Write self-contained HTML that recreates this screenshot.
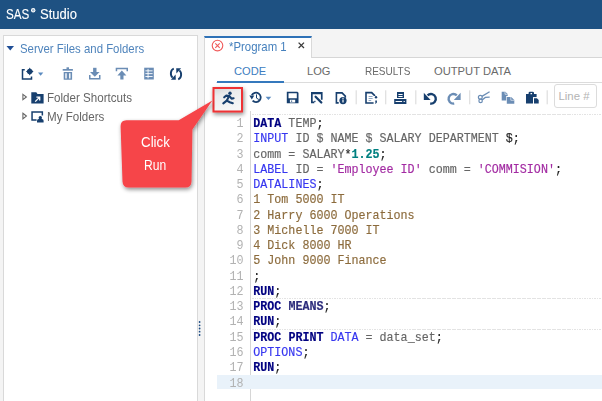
<!DOCTYPE html>
<html><head><meta charset="utf-8">
<style>
*{margin:0;padding:0;box-sizing:border-box}
html,body{width:602px;height:401px;overflow:hidden;background:#f4f4f4;font-family:"Liberation Sans",sans-serif}
.a{position:absolute}
#hdr{left:0;top:0;width:602px;height:28.5px;background:#1e5182}
#lp{left:3px;top:35px;width:195px;height:380px;background:#fff;border:1px solid #d9d9d9}
#rp{left:204px;top:57px;width:410px;height:360px;background:#fff;border-left:1px solid #d9d9d9}
#tab{left:204px;top:36px;width:108px;height:22px;background:#fff;border-top:2px solid #2f72b7;border-left:1px solid #d9d9d9;border-right:1px solid #d9d9d9}
#tabline{left:312px;top:57px;width:300px;height:1px;background:#d6d6d6}
.t{white-space:nowrap;line-height:1}
#code{left:253.3px;top:115.5px;transform:scaleY(1.07);transform-origin:0 0;-webkit-text-stroke:0.15px;font-family:"Liberation Mono",monospace;font-size:11.7px;line-height:14.271px;white-space:pre;color:#656565}
#gut{left:205px;top:115.5px;transform:scaleY(1.07);transform-origin:0 0;width:38.5px;font-family:"Liberation Mono",monospace;font-size:11.7px;line-height:14.271px;white-space:pre;color:#b2b2b2;text-align:right}
.k{color:#000080;font-weight:bold}
.b{color:#3636f0}
.s{color:#a22aa2}
.n{color:#008080;font-weight:bold}
.d{color:#8c6b3c}
.p{color:#222}
</style></head><body>
<div id="hdr" class="a"></div>
<div class="a t" style="left:6.3px;top:7.2px;font-size:14px;color:#fff;-webkit-text-stroke:0.12px #fff;transform:scaleX(0.83);transform-origin:0 0">SAS</div>
<div class="a t" style="left:39.6px;top:7.2px;font-size:14px;color:#fff;-webkit-text-stroke:0.12px #fff;transform:scaleX(0.93);transform-origin:0 0">Studio</div>

<div id="lp" class="a"></div>
<div class="a t" style="left:20px;top:43px;font-size:12.2px;color:#4f84bc;transform:scaleX(0.935);transform-origin:0 0">Server Files and Folders</div>
<div class="a t" style="left:46.7px;top:92px;font-size:12.4px;color:#666;transform:scaleX(0.935);transform-origin:0 0">Folder Shortcuts</div>
<div class="a t" style="left:46.7px;top:111px;font-size:12.4px;color:#666;transform:scaleX(0.935);transform-origin:0 0">My Folders</div>

<div id="rp" class="a"></div>
<div id="tabline" class="a"></div>
<div id="tab" class="a"></div>
<div class="a t" style="left:229px;top:41px;font-size:12.2px;color:#4580bd;transform:scaleX(0.935);transform-origin:0 0">*Program 1</div>
<div class="a" style="left:216px;top:82px;width:390px;height:1px;background:#dcdcdc"></div>
<div class="a" style="left:216.5px;top:81px;width:67.5px;height:2px;background:#3579bd"></div>
<div class="a t" style="left:234px;top:66px;font-size:11.1px;color:#3d7dc0">CODE</div>
<div class="a t" style="left:307px;top:66px;font-size:11.1px;color:#6a6a6a">LOG</div>
<div class="a t" style="left:364.6px;top:66px;font-size:11.1px;color:#6a6a6a;transform:scaleX(0.9);transform-origin:0 0">RESULTS</div>
<div class="a t" style="left:434px;top:66px;font-size:11.2px;color:#6a6a6a">OUTPUT DATA</div>

<!-- line # box -->
<div class="a" style="left:554px;top:84px;width:43px;height:23.5px;border:1.3px solid #dcdcdc;border-radius:3px;background:#fff"></div>
<div class="a t" style="left:558.5px;top:91px;font-size:11.4px;color:#b3b3b3">Line #</div>

<!-- editor -->
<div class="a" style="left:252px;top:114px;width:360px;height:1px;background:repeating-linear-gradient(90deg,#e3e3e3 0 1.5px,transparent 1.5px 2.5px)"></div>
<div class="a" style="left:252px;top:298px;width:360px;height:1px;background:repeating-linear-gradient(90deg,#e3e3e3 0 1.5px,transparent 1.5px 2.5px)"></div>
<div class="a" style="left:252px;top:328.5px;width:360px;height:1px;background:repeating-linear-gradient(90deg,#e3e3e3 0 1.5px,transparent 1.5px 2.5px)"></div>
<div class="a" style="left:250px;top:111px;width:1px;height:300px;background:#d6d6d6"></div>
<div class="a" style="left:216.5px;top:374.8px;width:390px;height:14.6px;background:#e9f2fa"></div>
<div id="gut" class="a">1
2
3
4
5
6
7
8
9
10
11
12
13
14
15
16
17
18</div>
<div id="code" class="a"><span class="k">DATA</span> TEMP<span class="p">;</span>
<span class="b">INPUT</span> ID $ NAME $ SALARY DEPARTMENT <span class="p">$;</span>
comm = SALARY<span class="p">*</span><span class="n">1.25</span><span class="p">;</span>
<span class="b">LABEL</span> ID = <span class="s">'Employee ID'</span> comm = <span class="s">'COMMISION'</span><span class="p">;</span>
<span class="b">DATALINES</span><span class="p">;</span>
<span class="d">1 Tom 5000 IT</span>
<span class="d">2 Harry 6000 Operations</span>
<span class="d">3 Michelle 7000 IT</span>
<span class="d">4 Dick 8000 HR</span>
<span class="d">5 John 9000 Finance</span>
<span class="p">;</span>
<span class="k">RUN</span><span class="p">;</span>
<span class="k">PROC</span> <span class="k" style="color:#2c2c7c">MEANS</span><span class="p">;</span>
<span class="k">RUN</span><span class="p">;</span>
<span class="k">PROC</span> <span class="k">PRINT</span> <span class="b">DATA</span> = data_set<span class="p">;</span>
<span class="b">OPTIONS</span><span class="p">;</span>
<span class="k">RUN</span><span class="p">;</span>
</div>

<svg class="a" style="left:0;top:0" width="602" height="401" viewBox="0 0 602 401">
  <defs>
    <filter id="sh" x="-30%" y="-30%" width="160%" height="160%"><feGaussianBlur in="SourceAlpha" stdDeviation="2"/><feOffset dx="1" dy="2" result="o"/><feComponentTransfer><feFuncA type="linear" slope="0.45"/></feComponentTransfer><feMerge><feMergeNode/><feMergeNode in="SourceGraphic"/></feMerge></filter>
    <linearGradient id="rb" x1="0" y1="0" x2="0.3" y2="1"><stop offset="0" stop-color="#d4d6d8"/><stop offset="0.35" stop-color="#ebeced"/><stop offset="1" stop-color="#f6f6f6"/></linearGradient>
  </defs>
  <!-- splitter dots -->
  <g fill="#1f4e85"><circle cx="199.6" cy="322" r="0.9"/><circle cx="199.6" cy="325.3" r="0.9"/><circle cx="199.6" cy="328.5" r="0.9"/><circle cx="199.6" cy="331.7" r="0.9"/><circle cx="199.6" cy="335" r="0.9"/></g>
  <!-- tree triangle -->
  <path d="M6.5 46 L14 46 L10.25 50.5 Z" fill="#1f4e96"/>
  <circle cx="33.2" cy="10.3" r="2.2" fill="#fff"/><circle cx="33.2" cy="10.3" r="1.2" fill="#9db4cc"/>
  <!-- close circle -->
  <circle cx="217.5" cy="45.6" r="5.3" fill="none" stroke="#f05a5a" stroke-width="1.1"/>
  <path d="M215.3 43.4 L219.7 47.8 M219.7 43.4 L215.3 47.8" stroke="#f05a5a" stroke-width="1.1"/>
  <path d="M298.6 42.6 L304 48 M304 42.6 L298.6 48" stroke="#3a3a3a" stroke-width="1.3"/>

  <!-- left toolbar -->
  <g fill="#173f6e">
    <path d="M21.75 69 h3 v1.5 h-1.5 v7.75 h7.5 v-1.75 h1.5 v3.25 h-10.5 z"/>
    <path d="M29.75 67.6 L31.1 70.1 L33.6 71.5 L31.1 72.9 L29.75 75.4 L28.4 72.9 L25.9 71.5 L28.4 70.1 Z"/>
    <circle cx="29.75" cy="71.5" r="2.7"/>
    <path d="M173.8 68.6 A3.9 5 0 0 0 172.6 77.6" fill="none" stroke="#173f6e" stroke-width="1.9"/>
    <path d="M170.9 79.7 L175.8 79.7 L175.6 74.6 Z"/>
    <path d="M178.2 79.4 A3.9 5 0 0 0 179.4 70.4" fill="none" stroke="#173f6e" stroke-width="1.9"/>
    <path d="M181.1 68.3 L176.2 68.3 L176.4 73.4 Z"/>
  </g>
  <path d="M38 72.4 L43.3 72.4 L40.65 75.7 Z" fill="#5b8bc0"/>
  <g fill="#6b8db5">
    <rect x="66.5" y="67.3" width="2.5" height="1.7"/>
    <rect x="62.7" y="69" width="10.2" height="1.7"/>
    <path d="M63.7 72 h8.4 v7.7 h-8.4 z M65.3 73.3 v5.1 h1.4 v-5.1 z M69.1 73.3 v5.1 h1.4 v-5.1 z" fill-rule="evenodd"/>
    <rect x="93.1" y="67.8" width="3.4" height="4.5"/>
    <path d="M90 72 L99.6 72 L94.8 76.8 Z"/>
    <path d="M89 75 h1.5 v3 h8.5 v-3 h1.5 v4.5 h-11.5 z"/>
    <path d="M115.7 67.7 h12.3 v3.6 h-1.5 v-2.1 h-9.3 v2.1 h-1.5 z"/>
    <path d="M117.4 75.4 L121.85 70.6 L126.4 75.4 Z"/>
    <rect x="120.3" y="75" width="3.2" height="4.5"/>
    <rect x="144.2" y="67.7" width="9.6" height="11.8"/>
    <g fill="#fff"><rect x="145.4" y="70.4" width="7.2" height="0.9"/><rect x="145.4" y="73.2" width="7.2" height="0.9"/><rect x="145.4" y="76" width="7.2" height="0.9"/><rect x="147.6" y="68.9" width="0.9" height="9.4"/></g>
  </g>

  <!-- tree icons -->
  <path d="M22.9 94.4 L26.4 97 L22.9 99.7 Z" fill="none" stroke="#666" stroke-width="1.1"/>
  <path d="M22.9 113.3 L26.4 116.1 L22.9 118.8 Z" fill="none" stroke="#666" stroke-width="1.1"/>
  <path d="M31.3 92.3 h5 l1.2 1.6 h6.1 v9.7 h-12.3 z" fill="#173f6e"/>
  <path d="M35.2 101.6 L39.2 97.6 M36.4 97.2 h3.3 v3.3" stroke="#fff" stroke-width="1.3" fill="none"/>
  <path d="M31.3 111.2 h11.8 v4.3 h-1.5 v-2.8 h-8.8 v6.5 h3.8 v1.5 h-5.3 z" fill="#173f6e"/>
  <circle cx="40.3" cy="117.8" r="1.7" fill="#173f6e"/>
  <path d="M37 122.6 v-1.8 q0-1.7 1.7-1.7 h3.2 q1.7 0 1.7 1.7 v1.8 z" fill="#173f6e"/>

  <!-- red button box -->
  <g filter="url(#sh)"><rect x="213.5" y="88" width="28.5" height="23.5" fill="url(#rb)" stroke="#ee3035" stroke-width="2"/></g>
  <!-- runner -->
  <g stroke="#173f6e" stroke-width="2.1" fill="none" stroke-linecap="round" stroke-linejoin="round">
    <path d="M224.2 97.3 L226.3 95.6 L229.3 96 L231.6 98.6 L233.6 98.2"/>
    <path d="M229 96.2 L226.8 100.6 L229.8 102.2 L232.8 103.2"/>
    <path d="M226.8 100.6 L223.3 103.4"/>
  </g>
  <circle cx="230" cy="93.2" r="1.7" fill="#173f6e"/>

  <!-- history -->
  <g fill="#173f6e">
    <path d="M251.8 95.2 A4.7 4.7 0 1 1 252.6 100.6" fill="none" stroke="#173f6e" stroke-width="1.8"/>
    <path d="M249.3 95.4 L254.3 95.4 L251.8 99.4 Z"/>
    <path d="M256.5 94.4 v3.7 l2.3 1.4" fill="none" stroke="#173f6e" stroke-width="1"/>
  </g>
  <path d="M265.6 96.7 L271.3 96.7 L268.45 99.9 Z" fill="#5b8bc0"/>

  <g fill="#173f6e">
    <!-- save -->
    <path d="M286.8 91.7 h10.6 l1.1 1.1 v10.5 h-11.7 z M288.5 93.3 v5 h8.3 v-5 z M289.9 99.8 v2.6 h5.3 v-2.6 z" fill-rule="evenodd"/>
    <circle cx="291.6" cy="101.1" r="0.7"/>
    <!-- save as -->
    <path d="M311 92.1 h11.6 v7.6 h-1.7 v-5.5 h-8.2 v7.4 h1.6 v1.7 h-3.3 z"/>
    <path d="M315.6 96.8 L321.3 102.5" stroke="#173f6e" stroke-width="2.3" stroke-linecap="round"/>
    <rect x="314.2" y="100.8" width="1.3" height="1.3"/>
    <!-- properties doc -->
    <path d="M335.6 92.1 h6.8 l3.7 3.7 v2 h-1.6 v-1.3 l-2.8 -2.8 h-4.5 v8.4 h1.5 v1.6 h-3.1 z"/>
    <circle cx="343" cy="100.6" r="3.6"/>
    <rect x="342.4" y="99.5" width="1.2" height="3" fill="#fff"/>
    <rect x="342.4" y="97.8" width="1.2" height="1.1" fill="#fff"/>
    <!-- submit doc -->
    <path d="M365.2 91.8 h6.8 l3.3 3.3 v0.8 h-1.6 v-0.1 l-2.4 -2.4 h-4.5 v8.8 h6.8 v1.6 h-8.4 z"/>
    <circle cx="376" cy="97.2" r="1.2"/>
    <path d="M375.3 100.6 h1.6 v1.8 l-1.2 1.4 h-0.6 l0.5 -1.3 h-0.3 z"/>
    <g fill="#8ea5c2"><rect x="368.6" y="96" width="4" height="1"/><rect x="368.6" y="98" width="4" height="1"/><rect x="368.6" y="100" width="2.6" height="1"/></g>
    <!-- printer -->
    <path d="M397 92 h7 v6 h-7 z M398.4 94 v1 h4.2 v-1 z M398.4 96 v1 h4.2 v-1 z" fill-rule="evenodd"/>
    <path d="M394.2 99 h12.2 v5 h-12.2 z M395.6 101 v1 h6.5 v-1 z M403.6 101 v1 h1.2 v-1 z" fill-rule="evenodd"/>
    <!-- undo -->
    <path d="M427.6 95.4 A4.8 4.8 0 1 1 430.2 103.5" fill="none" stroke="#173f6e" stroke-width="2.4"/>
    <path d="M423.8 92.8 L423.8 100 L430.6 100 Z"/>
    <!-- paste -->
    <path d="M526 94 h2.6 v-1 q0-1.3 1.3-1.3 h2.8 q1.3 0 1.3 1.3 v1 h2.6 v3.3 h-3.6 v6.1 h-7 z M530.5 92.9 v1.3 h1.6 v-1.3 z" fill-rule="evenodd"/>
    <rect x="533" y="97.3" width="6.3" height="6.6" fill="#fff"/>
    <path d="M534 98.3 h2.9 l1.8 1.8 v3.3 h-4.7 z"/>
  </g>
  <g fill="#6b8db5">
    <!-- redo -->
    <path d="M456.8 95.4 A4.8 4.8 0 1 0 454.2 103.5" fill="none" stroke="#6b8db5" stroke-width="2.4"/>
    <path d="M460.6 92.8 L460.6 100 L453.8 100 Z"/>
    <!-- scissors -->
    <circle cx="480.3" cy="97.2" r="1.9" fill="none" stroke="#6b8db5" stroke-width="1.2"/>
    <circle cx="480.6" cy="100.9" r="1.7" fill="none" stroke="#6b8db5" stroke-width="1.2"/>
    <path d="M481.9 96.4 L489.6 91.8 M482.1 99.9 L485.3 97.4 L489.7 97.2" fill="none" stroke="#6b8db5" stroke-width="1.3"/>
    <!-- copy -->
    <path d="M501.7 91.7 h3.6 l2.4 2.4 v1.9 h-1.5 v4.4 h-4.5 z"/>
    <path d="M506.8 96.9 h4.4 l3.1 3.1 v3.7 h-7.5 z"/>
  </g>
  <path d="M505 91.7 v2.6 h2.7" fill="none" stroke="#fff" stroke-width="0.6"/>
  <path d="M510.8 96.9 v3.4 h3.5" fill="none" stroke="#fff" stroke-width="0.6"/>
  <!-- separators -->
  <g fill="#dedede">
    <rect x="355.6" y="90.3" width="1.2" height="14"/>
    <rect x="385.1" y="90.3" width="1.2" height="14"/>
    <rect x="415.2" y="90.3" width="1.2" height="14"/>
    <rect x="469.1" y="90.3" width="1.2" height="14"/>
    <rect x="546.6" y="90.3" width="1.2" height="14"/>
  </g>

  <!-- callout -->
  <g filter="url(#sh)">
    <path d="M126.4 120.3 H178.7 L212.4 100.6 L192.4 129.5 L191.5 181.4 Q191.4 187.4 185.4 187.4 H128.7 Q122.7 187.4 122.5 181.4 L120.6 126.3 Q120.5 120.3 126.4 120.3 Z" fill="#f6444a"/>
  </g>
</svg>
<div class="a t" style="left:141px;top:133.9px;font-size:15.5px;color:#fff;transform:scaleX(0.86);transform-origin:0 0">Click</div>
<div class="a t" style="left:144.4px;top:156.5px;font-size:15.5px;color:#fff;transform:scaleX(0.78);transform-origin:0 0">Run</div>
</body></html>
